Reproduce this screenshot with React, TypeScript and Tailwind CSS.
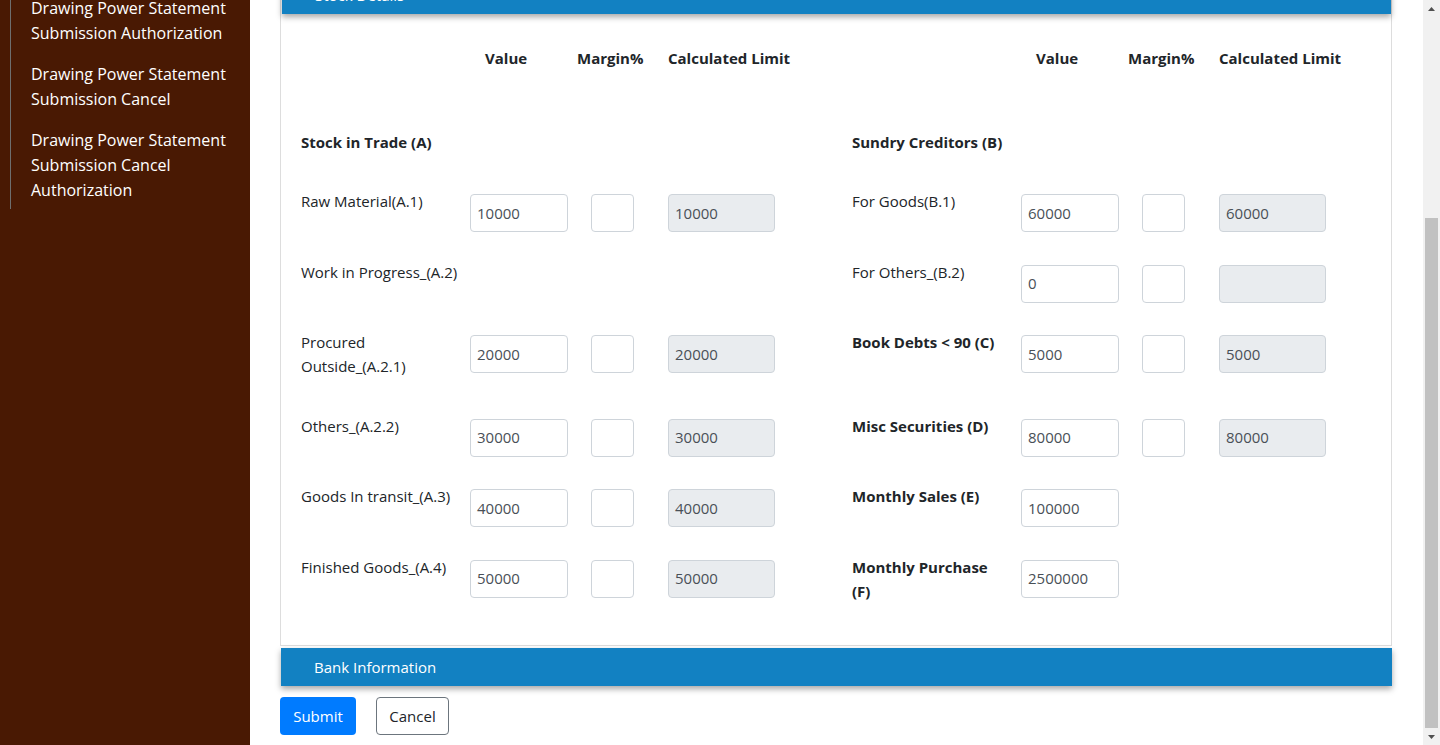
const font = "font-['Open_Sans',sans-serif]";

type Cell = {
  label: string[];
  bold?: boolean;
  value?: string;
  margin?: boolean;
  calc?: string;
};

const rows: [Cell, Cell][] = [
  [
    { label: ["Raw Material(A.1)"], value: "10000", margin: true, calc: "10000" },
    { label: ["For Goods(B.1)"], value: "60000", margin: true, calc: "60000" },
  ],
  [
    { label: ["Work in Progress_(A.2)"] },
    { label: ["For Others_(B.2)"], value: "0", margin: true, calc: "" },
  ],
  [
    { label: ["Procured", "Outside_(A.2.1)"], value: "20000", margin: true, calc: "20000" },
    { label: ["Book Debts < 90 (C)"], bold: true, value: "5000", margin: true, calc: "5000" },
  ],
  [
    { label: ["Others_(A.2.2)"], value: "30000", margin: true, calc: "30000" },
    { label: ["Misc Securities (D)"], bold: true, value: "80000", margin: true, calc: "80000" },
  ],
  [
    { label: ["Goods In transit_(A.3)"], value: "40000", margin: true, calc: "40000" },
    { label: ["Monthly Sales (E)"], bold: true, value: "100000" },
  ],
  [
    { label: ["Finished Goods_(A.4)"], value: "50000", margin: true, calc: "50000" },
    { label: ["Monthly Purchase", "(F)"], bold: true, value: "2500000" },
  ],
];

const menu = [
  ["Drawing Power Statement", "Submission Authorization"],
  ["Drawing Power Statement", "Submission Cancel"],
  ["Drawing Power Statement", "Submission Cancel", "Authorization"],
];

function Input({ value, width, readOnly }: { value: string; width: string; readOnly?: boolean }) {
  return (
    <div
      className={`mt-[5px] flex h-[38px] items-center rounded-[4px] border border-[#ced4da] pl-[6px] text-[15px] text-[#495057] ${width} ${
        readOnly ? "bg-[#e9ecef]" : "bg-white"
      }`}
    >
      {value}
    </div>
  );
}

function Half({ cell }: { cell: Cell }) {
  return (
    <div className="grid grid-cols-[169px_121px_77px_107px] items-start">
      <div className={`mb-2 text-[15px] leading-6 text-[#212529] ${cell.bold ? "font-bold" : ""}`}>
        {cell.label.map((l) => (
          <div key={l} className="whitespace-nowrap">
            {l}
          </div>
        ))}
      </div>
      <div>{cell.value !== undefined && <Input value={cell.value} width="w-[98px]" />}</div>
      <div>{cell.margin && <Input value="" width="w-[43px]" />}</div>
      <div>{cell.calc !== undefined && <Input value={cell.calc} width="w-[107px]" readOnly />}</div>
    </div>
  );
}

function HeaderRow() {
  return (
    <div className="grid grid-cols-[184px_92px_91px_1fr] text-[15px] font-bold leading-6 text-[#212529]">
      <div />
      <div>Value</div>
      <div>Margin%</div>
      <div className="whitespace-nowrap">Calculated Limit</div>
    </div>
  );
}

function SectionBar({ title }: { title: string }) {
  return (
    <div className="ml-px flex h-[38px] items-center bg-[#1281c2] pl-[33px] text-[15px] text-white shadow-[0_3px_6px_rgba(0,0,0,0.35)]">
      {title}
    </div>
  );
}

export default function App() {
  return (
    <div className={`flex h-[745px] w-[1440px] overflow-hidden bg-white ${font}`}>
      <aside className="w-[250px] shrink-0 bg-[#491903]">
        <div className="-mt-[4px] ml-[10px] border-l border-[#6e6e6e] pb-[6px] pl-[20px]">
          {menu.map((item, i) => (
            <div key={i} className="mb-[16px] text-[16px] leading-[25px] text-white last:mb-0">
              {item.map((l) => (
                <div key={l}>{l}</div>
              ))}
            </div>
          ))}
        </div>
      </aside>

      <main className="flex-1 overflow-hidden">
        <div className="-mt-[24px] pl-[30px] pr-[31px]">
          <div className="border-x border-b border-[#dddddd]">
            <SectionBar title="Stock Details" />
            <div className="px-[20px] pb-[7px] pt-[32px]">
              <div className="grid grid-cols-[521px_1fr] gap-x-[30px]">
                <HeaderRow />
                <HeaderRow />
              </div>
              <div className="mt-[60px] grid grid-cols-[521px_1fr] gap-x-[30px] text-[15px] font-bold leading-6 text-[#212529]">
                <div>Stock in Trade (A)</div>
                <div>Sundry Creditors (B)</div>
              </div>
              <div className="mt-[35px]">
                {rows.map(([l, r], i) => (
                  <div key={i} className="mb-[27.5px] grid grid-cols-[521px_1fr] gap-x-[30px]">
                    <Half cell={l} />
                    <Half cell={r} />
                  </div>
                ))}
              </div>
            </div>
          </div>
          <div className="mt-[2px]">
            <SectionBar title="Bank Information" />
          </div>
          <div className="mt-[11px] flex gap-[20px]">
            <button className="h-[38px] w-[76px] rounded-[4px] bg-[#007bff] text-[15px] text-white">Submit</button>
            <button className="h-[38px] w-[73px] rounded-[4px] border border-[#6c757d] bg-white text-[15px] text-[#212529]">
              Cancel
            </button>
          </div>
        </div>
      </main>

      <div className="flex w-[17px] shrink-0 flex-col bg-[#f1f1f1]">
        <div className="flex h-[17px] items-center justify-center">
          <svg width="7" height="4" viewBox="0 0 7 4">
            <path d="M0 4 L3.5 0 L7 4 Z" fill="#505050" />
          </svg>
        </div>
        <div className="h-[201px]" />
        <div className="mx-[2px] flex-1 bg-[#c1c1c1]" />
        <div className="flex h-[17px] items-center justify-center">
          <svg width="7" height="4" viewBox="0 0 7 4">
            <path d="M0 0 L7 0 L3.5 4 Z" fill="#505050" />
          </svg>
        </div>
      </div>
    </div>
  );
}
